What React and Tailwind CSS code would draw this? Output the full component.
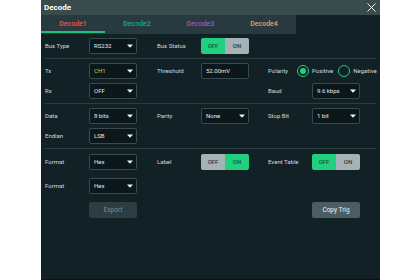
import React from "react";

const Tri = () => (
  <svg width="6" height="4" viewBox="0 0 6 4" className="shrink-0">
    <path d="M0 0.5 L6 0.5 L3 3.8 Z" fill="#f2f4f4" />
  </svg>
);

const Select = ({ value, color = "text-[#e4e8e9]" }) => (
  <div className="w-[48px] h-[16px] rounded-[2px] border border-[#384a4e] bg-[#0b171a] flex items-center justify-between pl-[4px] pr-[3px]">
    <span className={`text-[6px] leading-none ${color}`}>{value}</span>
    <Tri />
  </div>
);

const Input = ({ value }) => (
  <div className="w-[48px] h-[16px] rounded-[2px] border border-[#384a4e] bg-[#0b171a] flex items-center pl-[4px]">
    <span className="text-[6px] leading-none text-[#e4e8e9]">{value}</span>
  </div>
);

const Toggle = ({ on }) => (
  <div className="w-[48px] h-[16px] rounded-[2px] overflow-hidden flex text-[6px] font-medium leading-none">
    <div className={`w-1/2 flex items-center justify-center ${!on ? "bg-[#20d07f] text-[#0e5a34]" : "bg-[#a6b2b5] text-[#2f3a3d]"}`}>OFF</div>
    <div className={`w-1/2 flex items-center justify-center ${on ? "bg-[#20d07f] text-[#0e5a34]" : "bg-[#a6b2b5] text-[#2f3a3d]"}`}>ON</div>
  </div>
);

const Label = ({ children }) => (
  <div className="w-[44px] text-[6px] leading-none text-[#d3d9db]">{children}</div>
);

const Cell = ({ label, children, w = "w-[112px]" }) => (
  <div className={`${w} flex items-center shrink-0`}>
    <Label>{label}</Label>
    {children}
  </div>
);

const Row = ({ children, className = "" }) => (
  <div className={`flex items-center h-[16px] ${className}`}>{children}</div>
);

const Sep = () => <div className="h-[1px] bg-[#2c3d41] mr-[4px]" />;

const Radio = ({ checked }) => (
  <div className="w-[12px] h-[12px] rounded-full border-[1.5px] border-[#20d07f] flex items-center justify-center shrink-0">
    {checked && <div className="w-[6px] h-[6px] rounded-full bg-[#20d07f]" />}
  </div>
);

export default function App() {
  return (
    <div className="w-[420px] h-[280px] bg-white" style={{ fontFamily: "Roboto, 'Liberation Sans', sans-serif" }}>
      <div className="ml-[41px] w-[339px] h-[280px] bg-[#122126] flex flex-col border-b border-[#0a1417]">
        <div className="h-[15px] bg-[#3a4b4c] flex items-center justify-between pl-[3px] pr-[4px]">
          <span className="text-[8px] font-bold text-white leading-none">Decode</span>
          <svg width="9" height="9" viewBox="0 0 9 9">
            <path d="M0.5 0.5 L8.5 8.5 M8.5 0.5 L0.5 8.5" stroke="#f0f2f2" strokeWidth="1" />
          </svg>
        </div>
        <div className="h-[19px] flex">
          <div className="w-[255px] bg-[#283a3f] flex">
            <div className="w-[64px] relative flex items-center justify-center">
              <span className="text-[7px] font-medium text-[#e9574f] leading-none">Decode1</span>
              <div className="absolute left-0 right-0 bottom-[1px] h-[2px] bg-[#20c07a]" />
            </div>
            <div className="w-[64px] flex items-center justify-center">
              <span className="text-[7px] font-medium text-[#16a89b] leading-none">Decode2</span>
            </div>
            <div className="w-[63px] flex items-center justify-center">
              <span className="text-[7px] font-medium text-[#9a52d8] leading-none">Decode3</span>
            </div>
            <div className="w-[64px] flex items-center justify-center">
              <span className="text-[7px] font-medium text-[#e2a55a] leading-none">Decode4</span>
            </div>
          </div>
        </div>
        <div className="flex flex-col pl-[4px] pt-[4px]">
          <Row>
            <Cell label="Bus Type"><Select value="RS232" /></Cell>
            <Cell label="Bus Status" w="w-[111px]"><Toggle on={false} /></Cell>
          </Row>
          <div className="mt-[4px]"><Sep /></div>
          <Row className="mt-[4px]">
            <Cell label="Tx"><Select value="CH1" color="text-[#d2d643]" /></Cell>
            <Cell label="Threshold" w="w-[111px]"><Input value="52.00mV" /></Cell>
            <div className="flex items-center">
              <div className="w-[29px] text-[6px] leading-none text-[#d3d9db]">Polarity</div>
              <Radio checked />
              <span className="ml-[3px] text-[6px] leading-none text-[#d3d9db]">Positive</span>
              <div className="ml-[5px]"><Radio /></div>
              <span className="ml-[3px] text-[6px] leading-none text-[#d3d9db]">Negative</span>
            </div>
          </Row>
          <Row className="mt-[4px]">
            <Cell label="Rx"><Select value="OFF" /></Cell>
            <div className="w-[111px] shrink-0" />
            <Cell label="Baud"><Select value="9.6  kbps" /></Cell>
          </Row>
          <div className="mt-[4px]"><Sep /></div>
          <Row className="mt-[4px]">
            <Cell label="Data"><Select value="8 bits" /></Cell>
            <Cell label="Parity" w="w-[111px]"><Select value="None" /></Cell>
            <Cell label="Stop Bit"><Select value="1 bit" /></Cell>
          </Row>
          <Row className="mt-[4px]">
            <Cell label="Endian"><Select value="LSB" /></Cell>
          </Row>
          <div className="mt-[4px]"><Sep /></div>
          <Row className="mt-[5px]">
            <Cell label="Format"><Select value="Hex" /></Cell>
            <Cell label="Label" w="w-[111px]"><Toggle on /></Cell>
            <Cell label="Event Table"><Toggle on={false} /></Cell>
          </Row>
          <Row className="mt-[8px]">
            <Cell label="Format"><Select value="Hex" /></Cell>
          </Row>
          <Row className="mt-[8px]">
            <div className="w-[44px]" />
            <div className="w-[48px] h-[16px] rounded-[2px] bg-[#2c3e42] flex items-center justify-center text-[6.5px] leading-none text-[#7d8b8e]">Export</div>
            <div className="w-[175px]" />
            <div className="w-[48px] h-[16px] rounded-[2px] bg-[#4b5d61] flex items-center justify-center text-[6.5px] leading-none text-[#f0f3f3]">Copy Trig</div>
          </Row>
        </div>
      </div>
    </div>
  );
}
